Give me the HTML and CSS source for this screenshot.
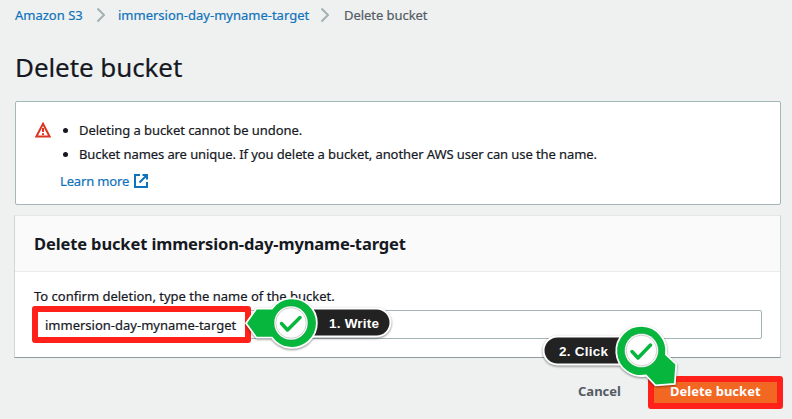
FILE: index.html
```
<!DOCTYPE html>
<html lang="en">
<head>
<meta charset="utf-8">
<title>Delete bucket</title>
<link rel="stylesheet" href="styles.css">
</head>
<body>
<nav class="crumbs">
  <a class="crumb-root">Amazon S3</a>
  <svg class="chevron" width="10" height="16" viewBox="0 0 10 16"><path d="M1.500 1.500 8 8l-6.500 6.500"/></svg>
  <a class="crumb-bucket">immersion-day-myname-target</a>
  <svg class="chevron" width="10" height="16" viewBox="0 0 10 16"><path d="M1.500 1.500 8 8l-6.500 6.500"/></svg>
  <span class="crumb-current">Delete bucket</span>
</nav>
<h1>Delete bucket</h1>
<section class="alert">
  <svg class="warn" width="16" height="16" viewBox="0 0 16 16"><path d="M8 1.800 14.600 14.500H1.400Z"/><path d="M8 6v4M8 11.300v1.700"/></svg>
  <div class="alert-body">
    <ul>
      <li class="item-undo">Deleting a bucket cannot be undone.</li>
      <li class="item-unique">Bucket names are unique. If you delete a bucket, another AWS user can use the name.</li>
    </ul>
    <a class="learn"><span class="learn-text">Learn more</span><svg width="14" height="14" viewBox="0 0 14 14"><path d="M6 1H1v12h12V8M8.500 1H13v4.500M13 1 5.500 8.500"/></svg></a>
  </div>
</section>
<section class="card">
  <header><h2>Delete bucket immersion-day-myname-target</h2></header>
  <div class="card-body">
    <label>To confirm deletion, type the name of the bucket.</label>
    <div class="field"><span class="field-text">immersion-day-myname-target</span></div>
  </div>
</section>
<footer>
  <span class="cancel">Cancel</span>
  <span class="submit"><span class="submit-text">Delete bucket</span></span>
</footer>
<div class="mark mark-field"></div>
<div class="mark mark-submit"></div>
<svg class="notes" width="792" height="419" viewBox="0 0 792 419">
  <g class="shadowed">
    <path class="pill" d="M300 308.500h76.500a14 14 0 0 1 0 28H300Z"/>
    <path class="pin" d="M246 323.300 256.500 308.500H272A24.800 24.800 0 1 1 272 337.700H256.500Z"/>
  </g>
  <circle class="disc" cx="291" cy="323" r="17"/>
  <circle class="rim" cx="291" cy="323" r="15.300"/>
  <path class="tick" d="m281.500 323.500 6 6.500 12.500-12.500"/>
  <text class="note" x="329" y="328" textLength="50">1. Write</text>
  <g class="shadowed">
    <path class="pill" d="M625 336.500h-67.500a14 14 0 0 0 0 28H625Z"/>
    <path class="pin" d="M666 354.500 676.300 364 674.800 383.800 655.500 385.400 646 375.500A25 25 0 1 1 666 354.500Z"/>
  </g>
  <circle class="disc" cx="641.500" cy="350.500" r="17"/>
  <circle class="rim" cx="641.500" cy="350.500" r="15.300"/>
  <path class="tick" d="m632 351.500 6 6.500 12.500-13"/>
  <text class="note" x="559" y="355.500" textLength="49">2. Click</text>
</svg>
</body>
</html>
```
FILE: styles.css
```
* { box-sizing: border-box; }
body {
  margin: 0;
  width: 792px;
  height: 419px;
  overflow: hidden;
  position: relative;
  padding: 0 11px 0 15px;
  background: #eff1f1;
  color: #16191f;
  font: 400 13px/20px "Noto Sans", sans-serif;
  -webkit-text-stroke: 0.2px currentColor;
  white-space: nowrap;
}
.crumbs { display: flex; height: 30px; align-items: center; }
.crumbs a, .learn { color: #0f73bb; }
.crumb-root { width: 81px; }
.crumb-bucket { width: 202px; margin-left: 12px; }
.crumb-current { margin-left: 14px; color: #545b64; letter-spacing: -0.05px; }
.chevron { flex: none; fill: none; stroke: #a5b0b2; stroke-width: 2; }
h1 { margin: 19px 0 16px; font-size: 26px; line-height: 36px; font-weight: 400; letter-spacing: -0.08px; }
.alert { display: flex; height: 104px; padding: 18px 19px; background: #fff; border: 1px solid #a4b7b9; border-radius: 2px; }
.warn { margin-top: 2px; fill: none; stroke: #dc3522; stroke-width: 2; }
.alert-body { margin-left: 9px; }
ul { margin: 0; padding-left: 19px; }
li { height: 24px; }
.item-undo { letter-spacing: -0.06px; }
.item-unique { letter-spacing: -0.085px; }
.learn { display: flex; align-items: center; height: 25px; letter-spacing: -0.15px; }
.learn svg { margin-left: 5px; fill: none; stroke: #0f73bb; stroke-width: 2; }
.learn-text { width: 69px; }
.card { height: 143px; margin-top: 10px; margin-left: -1px; background: #fff; border: 1px solid #e3e7e7; border-right-color: #cfd6d7; border-bottom-color: #8e9c9f; border-left-color: #cfd6d7; }
header { height: 56px; padding: 17px 19px; background: #fafafa; border-bottom: 1px solid #e7ebeb; }
h2 { margin: 0; font-size: 16.500px; line-height: 22px; font-weight: 700; letter-spacing: -0.13px; -webkit-text-stroke: 0; }
.card-body { padding: 14px 18px 0 19px; }
label { display: block; height: 24px; }
.field { height: 29px; padding: 4px 10px; border: 1px solid #a4b3b5; border-radius: 2px; }
footer { display: flex; justify-content: flex-end; align-items: center; height: 30px; margin-top: 18px; font-weight: 700; -webkit-text-stroke: 0; }
.cancel { width: 42px; margin-right: 32px; color: #545b64; }
.submit { width: 129px; height: 28px; padding: 4px 18px; background: #f26722; color: #fff; }
.mark { position: absolute; border: 6px solid #ff211a; border-radius: 3px; }
.mark-field { left: 32px; top: 306px; width: 219px; height: 37px; }
.mark-submit { left: 648px; top: 376px; width: 135px; height: 33px; }
.notes { position: absolute; left: 0; top: 0; -webkit-text-stroke: 0; }
.shadowed { filter: drop-shadow(0 1px 1px rgba(0, 0, 0, 0.45)); }
.pill { fill: #222; stroke: #fff; stroke-width: 2; }
.pin { fill: #07b63d; stroke: #fff; stroke-width: 1.8; }
.disc { fill: #fff; stroke: #008b2d; stroke-opacity: 0.4; stroke-width: 1; }
.rim { fill: none; stroke: #cfcfcf; stroke-width: 1; }
.tick { fill: none; stroke: #07b63d; stroke-width: 3.5; stroke-linecap: round; stroke-linejoin: round; }
.note { fill: #fff; font: 700 13.500px "Liberation Sans", sans-serif; }
```
